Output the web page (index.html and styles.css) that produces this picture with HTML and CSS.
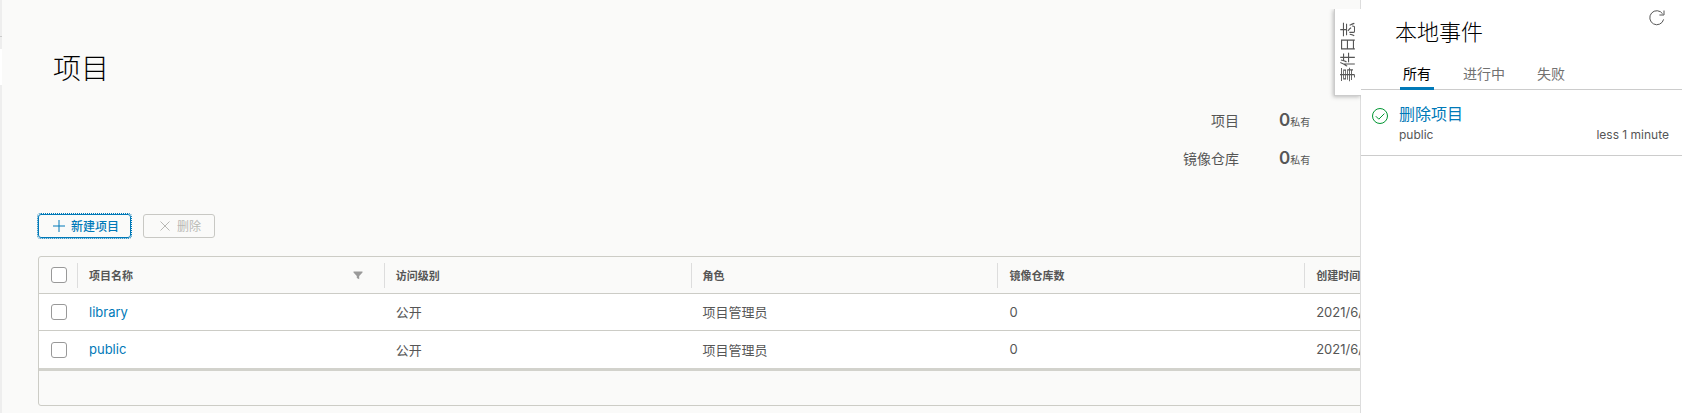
FILE: index.html
```html
<!DOCTYPE html>
<html lang="zh-CN">
<head>
    <meta charset="UTF-8">
    <meta name="viewport" content="width=device-width, initial-scale=1.0">
    <title>项目</title>
    <link rel="stylesheet" href="styles.css">
</head>
<body>

    <div class="sidenav">
        <div class="sidenav-head"></div>
        <div class="sidenav-gap"></div>
        <div class="sidenav-active"></div>
    </div>

    <main class="content">
        <h1>项目</h1>

        <dl class="statistics">
            <div class="stat">
                <dt>项目</dt>
                <dd><strong>0</strong><small>私有</small></dd>
            </div>
            <div class="stat">
                <dt>镜像仓库</dt>
                <dd><strong>0</strong><small>私有</small></dd>
            </div>
        </dl>

        <div class="actions">
            <button type="button" class="btn btn-new">
                <svg width="12" height="12" viewBox="0 0 12 12"><path d="M6 0v12M0 6h12" /></svg>
                新建项目
            </button>
            <button type="button" class="btn btn-delete" disabled>
                <svg width="12" height="12" viewBox="0 0 12 12"><path d="M1.5 1.5l9 9M10.5 1.5l-9 9" /></svg>
                删除
            </button>
        </div>

        <div class="datagrid">
            <table>
                <thead>
                    <tr>
                        <th class="select"><input type="checkbox" aria-label="全选"></th>
                        <th>
                            <div class="column">项目名称
                                <button type="button" class="filter" aria-label="筛选">
                                    <svg width="10" height="9" viewBox="0 0 10 9"><path d="M0.5 0.5h9v1L6.2 5v3.2L3.8 7V5L0.5 1.5z" /></svg>
                                </button>
                            </div>
                        </th>
                        <th><div class="column">访问级别</div></th>
                        <th><div class="column">角色</div></th>
                        <th><div class="column">镜像仓库数</div></th>
                        <th><div class="column">创建时间</div></th>
                    </tr>
                </thead>
                <tbody>
                    <tr>
                        <td class="select"><input type="checkbox" aria-label="library"></td>
                        <td><a href="#library">library</a></td>
                        <td>公开</td>
                        <td>项目管理员</td>
                        <td>0</td>
                        <td>2021/6/</td>
                    </tr>
                    <tr>
                        <td class="select"><input type="checkbox" aria-label="public"></td>
                        <td><a href="#public">public</a></td>
                        <td>公开</td>
                        <td>项目管理员</td>
                        <td>0</td>
                        <td>2021/6/</td>
                    </tr>
                </tbody>
            </table>
            <div class="datagrid-footer"></div>
        </div>
    </main>

    <!-- Ereignisprotokoll -->
    <aside class="events">
        <button type="button" class="events-handle"><span>事件日志</span></button>

        <div class="events-head">
            <h2>本地事件</h2>
            <button type="button" class="refresh" aria-label="刷新">
                <svg width="18" height="18" viewBox="0 0 18 18"><path d="M15.6 10.4A7 7 0 1 1 14.6 4.8M16 1.5V6h-4.6" /></svg>
            </button>
        </div>

        <div class="tabs">
            <button type="button" class="tab active">所有</button>
            <button type="button" class="tab">进行中</button>
            <button type="button" class="tab">失败</button>
        </div>

        <div class="event">
            <svg class="event-icon" width="18" height="18" viewBox="0 0 18 18"><circle cx="9" cy="9" r="7.5" /><path d="M4.8 9.2l3 3 5.6-5.6" /></svg>
            <div class="event-body">
                <a href="#event">删除项目</a>
                <div class="event-info">
                    <span>public</span>
                    <span>less 1 minute</span>
                </div>
            </div>
        </div>
    </aside>

</body>
</html>
```
FILE: styles.css
```css
* {
    box-sizing: border-box;
}

body {
    margin: 0;
    display: flex;
    min-height: 100vh;
    overflow: hidden;
    background-color: #fafaf9;
    color: #565656;
    font-family: Inter, "Noto Sans CJK SC", sans-serif;
    font-size: 13px;
}

button {
    padding: 0;
    border: 0;
    background: none;
    color: inherit;
    font-family: inherit;
    cursor: pointer;
}

a {
    color: #0079b8;
    text-decoration: none;
}

svg {
    display: block;
    flex: none;
    fill: none;
    stroke: currentColor;
}

.sidenav {
    flex: none;
    width: 2px;
    background-color: #eee;
}

.sidenav-head {
    height: 37px;
    border-bottom: 1px solid #ccc;
}

.sidenav-gap {
    height: 12px;
}

.sidenav-active {
    height: 36px;
    background-color: white;
}

.content {
    flex: 1;
    min-width: 0;
    padding: 49px 70px 7px 36px;
}

h1,
h2 {
    margin: 0;
    color: black;
    font-weight: 300;
}

h1 {
    padding-left: 15px;
    font-size: 28px;
    line-height: 40px;
}

/* Statistik rechts oben */
.statistics {
    display: flex;
    flex-direction: column;
    align-items: flex-end;
    gap: 14px;
    margin: 20px 0 0;
    padding-right: 299px;
}

.stat {
    display: flex;
    gap: 40px;
}

.stat dt,
.stat dd {
    height: 24px;
    margin: 0;
    font-size: 14px;
    line-height: 24px;
}

.stat dd {
    width: 34px;
    line-height: 22px;
    white-space: nowrap;
}

.stat strong {
    font-size: 17px;
    font-weight: 600;
}

.stat small {
    font-size: 10px;
}

.actions {
    display: flex;
    gap: 12px;
    margin: 43px 0 18px;
}

.btn {
    display: flex;
    align-items: center;
    gap: 6px;
    height: 24px;
    padding: 0 11px 1px 14px;
    border: 1px solid #0079b8;
    border-radius: 3px;
    color: #0079b8;
    font-size: 12px;
    font-weight: 500;
}

.btn-new {
    outline: 1px dotted #0079b8;
}

.btn-delete {
    padding: 0 13px 1px 15px;
    border-color: #c8c8c4;
    color: #b8b8b4;
    font-weight: 400;
}

.datagrid {
    border: 1px solid #ccccc6;
    border-radius: 3px;
}

table {
    width: 100%;
    table-layout: fixed;
    border-spacing: 0;
}

th,
td {
    height: 37px;
    padding: 0 0 0 12px;
    border-bottom: 1px solid #ccccc6;
    text-align: left;
    white-space: nowrap;
}

th {
    padding: 0;
    font-size: 11px;
}

td {
    padding-bottom: 1px;
    background-color: white;
}

tbody tr:last-child td {
    height: 40px;
    border-bottom: 3px solid #d2d2cc;
}

.select {
    width: 38px;
    padding: 0 0 0 12px;
}

.column {
    display: flex;
    align-items: center;
    justify-content: space-between;
    height: 25px;
    padding: 0 21px 0 11px;
    border-left: 1px solid #ddd;
}

.filter svg {
    fill: #9a9a9a;
    stroke: none;
}

input[type="checkbox"] {
    appearance: none;
    display: block;
    width: 16px;
    height: 16px;
    margin: 0;
    border: 1px solid #999;
    border-radius: 3px;
    background-color: white;
}

.datagrid-footer {
    height: 34px;
}

/* Panel liegt über dem Inhalt */
.events {
    position: fixed;
    top: 0;
    right: 0;
    bottom: 0;
    width: 322px;
    border-left: 1px solid #ddd;
    background-color: white;
}

.events-handle {
    position: absolute;
    top: 9px;
    right: 100%;
    width: 27px;
    height: 87px;
    border-left: 1px solid #ccc;
    border-bottom: 1px solid #ccc;
    background-color: white;
    box-shadow: -1px 1px 4px rgba(0, 0, 0, 0.25);
    clip-path: inset(0 0 -6px -6px);
    font-size: 15px;
}

.events-handle span {
    display: block;
    writing-mode: vertical-rl;
    text-orientation: sideways;
    transform: rotate(180deg);
    line-height: 26px;
}

.events-head {
    display: flex;
    justify-content: space-between;
    padding: 9px 16px 0 34px;
}

h2 {
    padding-top: 7px;
    font-size: 22px;
    line-height: 32px;
}

.refresh {
    align-self: flex-start;
}

.tabs {
    display: flex;
    gap: 26px;
    margin-top: 10px;
    padding-left: 39px;
    border-bottom: 1px solid #ccc;
}

.tab {
    height: 32px;
    margin-bottom: -1px;
    padding: 0 3px;
    border-bottom: 3px solid transparent;
    color: #717171;
    font-size: 14px;
}

.tab.active {
    border-bottom-color: #0079b8;
    color: black;
}

.event {
    display: flex;
    gap: 10px;
    padding: 12px 13px 11px 10px;
    border-bottom: 1px solid #ccc;
}

.event-icon {
    margin-top: 5px;
    color: #009632;
}

.event-body {
    flex: 1;
}

.event a {
    display: block;
    font-size: 16px;
    line-height: 24px;
}

.event-info {
    display: flex;
    justify-content: space-between;
    font-size: 12px;
    line-height: 18px;
}
```
